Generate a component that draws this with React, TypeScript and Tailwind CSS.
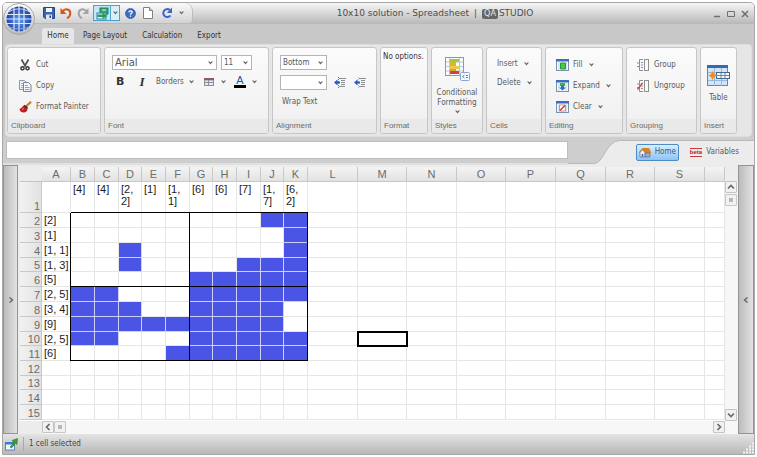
import type { ReactNode } from "react";

const COLUMNS = [
  { name: "A", width: 29 },
  { name: "B", width: 24 },
  { name: "C", width: 24 },
  { name: "D", width: 23 },
  { name: "E", width: 24 },
  { name: "F", width: 24 },
  { name: "G", width: 23 },
  { name: "H", width: 24 },
  { name: "I", width: 24 },
  { name: "J", width: 23 },
  { name: "K", width: 24 },
  { name: "L", width: 50 },
  { name: "M", width: 49 },
  { name: "N", width: 50 },
  { name: "O", width: 49 },
  { name: "P", width: 50 },
  { name: "Q", width: 50 },
  { name: "R", width: 49 },
  { name: "S", width: 50 },
  { name: "", width: 0 },
];

const TOP_CLUES: Record<string, string> = {
  B: "[4]", C: "[4]", D: "[2, 2]", E: "[1]", F: "[1, 1]",
  G: "[6]", H: "[6]", I: "[7]", J: "[1, 7]", K: "[6, 2]",
};

type Row = { n: number; height: number; clue?: string; filled?: string };

const ROWS: Row[] = [
  { n: 1, height: 31 },
  { n: 2, height: 15, clue: "[2]", filled: "JK" },
  { n: 3, height: 15, clue: "[1]", filled: "K" },
  { n: 4, height: 15, clue: "[1, 1]", filled: "DK" },
  { n: 5, height: 14, clue: "[1, 3]", filled: "DIJK" },
  { n: 6, height: 15, clue: "[5]", filled: "GHIJK" },
  { n: 7, height: 15, clue: "[2, 5]", filled: "BCGHIJK" },
  { n: 8, height: 15, clue: "[3, 4]", filled: "BCDGHIJ" },
  { n: 9, height: 15, clue: "[9]", filled: "BCDEFGHIJ" },
  { n: 10, height: 14, clue: "[2, 5]", filled: "BCGHIJK" },
  { n: 11, height: 15, clue: "[6]", filled: "FGHIJK" },
  { n: 12, height: 15 },
  { n: 13, height: 14 },
  { n: 14, height: 15 },
  { n: 15, height: 15 },
];

const BLACK_RIGHT = "relative border-r-0 after:absolute after:top-0 after:right-0 after:w-px after:bg-black";
const BLACK_BOTTOM = "relative border-b-0 before:absolute before:bottom-0 before:left-0 before:h-px before:bg-black";

function cellClass(col: string, row: Row) {
  const inBoard = row.n >= 2 && row.n <= 11;
  const boardCol = col >= "B" && col <= "K";
  const filled = col !== "" && !!row.filled?.includes(col);
  const blackRight = inBoard && (col === "A" || col === "F" || col === "K");
  const blackBottom = boardCol && (row.n === 1 || row.n === 6 || row.n === 11);
  return [
    "p-0 pl-[2px] text-left",
    row.n === 1 ? "pt-px align-top" : "whitespace-nowrap align-middle",
    filled ? "border-[#cdd0fa] bg-[#4a55e6]" : "border-[#e6e6e6] bg-white",
    blackRight ? BLACK_RIGHT : "border-r",
    blackRight && (blackBottom ? "after:bottom-0" : "after:-bottom-px"),
    blackBottom ? BLACK_BOTTOM : "border-b",
    blackBottom && (blackRight ? "before:right-0" : "before:-right-px"),
    col === "M" && row.n === 10 && "outline-2 -outline-offset-1 outline-black",
  ]
    .filter(Boolean)
    .join(" ");
}

function Chevron({ className = "" }: { className?: string }) {
  return (
    <svg viewBox="0 0 5 4" className={"h-[4px] w-[5px] shrink-0 " + className} aria-hidden="true">
      <path d="M0 .5h1.5l1 1 1-1H5L2.5 3.5z" fill="#666" />
    </svg>
  );
}

function SaveIcon() {
  return (
    <svg viewBox="0 0 12 12" className="size-[12px]">
      <path d="M.5.5h11v11H2l-1.500-1.500z" fill="#3c64b4" stroke="#24448c" />
      <path d="M3 1h6v4H3z" fill="#f2f6fc" />
      <path d="M3 7.500h6V12H3z" fill="#dfe4ee" />
      <path d="M6.500 8.500h1.500V11H6.500z" fill="#24448c" />
    </svg>
  );
}

function UndoIcon({ redo = false }: { redo?: boolean }) {
  const color = redo ? "#a4a4a4" : "#d8551c";
  return (
    <svg viewBox="0 0 12 12" className={redo ? "size-[12px] -scale-x-100" : "size-[12px]"}>
      <path d="M2.500 4.500C5 1 10.500 2 10.300 6.500 10.200 9 8.500 10.500 7 11.200" fill="none" stroke={color} strokeWidth="2" />
      <path d="M.5 1v6h6z" fill={color} />
    </svg>
  );
}

function SwitchIcon() {
  return (
    <svg viewBox="0 0 13 13" className="size-[13px]">
      <rect x="4" y="1" width="8" height="6" fill="#2faa6a" stroke="#1c7c58" />
      <rect x="1" y="6" width="9" height="6" fill="#e8f6ff" stroke="#3577b8" />
      <path d="M1.500 7.500l5 0V5.500l5 3.500-5 3V10h-5z" fill="#22a052" />
      <path d="M6 3h4" stroke="#d8f4e2" />
    </svg>
  );
}

function HelpIcon() {
  return (
    <svg viewBox="0 0 12 12" className="size-[11px]">
      <circle cx="6" cy="6" r="5.300" fill="#3a6fc4" stroke="#24509c" />
      <path d="M4.200 4.600C4.300 2.500 8 2.600 7.800 4.700 7.700 5.800 6 5.900 6 7.300" fill="none" stroke="#fff" strokeWidth="1.400" />
      <rect x="5.300" y="8.200" width="1.400" height="1.400" fill="#fff" />
    </svg>
  );
}

function PageIcon() {
  return (
    <svg viewBox="0 0 10 12" className="h-[12px] w-[10px]">
      <path d="M.5.5h6l3 3v8h-9z" fill="#fff" stroke="#808080" />
      <path d="M6.500.5v3h3" fill="#ddd" stroke="#808080" />
    </svg>
  );
}

function RefreshIcon() {
  return (
    <svg viewBox="0 0 12 12" className="size-[12px]">
      <path d="M9.500 8.500A4 4 0 1 1 8.800 3" fill="none" stroke="#3c64c8" strokeWidth="2" />
      <path d="M11 .5V6H5.800z" fill="#3c64c8" />
    </svg>
  );
}

function Orb() {
  return (
    <svg viewBox="0 0 32 32" className="size-[32px]">
      <defs>
        <radialGradient id="orb" cx="50%" cy="55%" r="55%">
          <stop offset="0" stopColor="#5ea0f4" />
          <stop offset="1" stopColor="#1c3c9c" />
        </radialGradient>
        <linearGradient id="ring" x1="0" y1="0" x2="0" y2="1">
          <stop offset="0" stopColor="#fdfdfd" />
          <stop offset="1" stopColor="#b8b8b8" />
        </linearGradient>
      </defs>
      <circle cx="16" cy="16" r="15.500" fill="url(#ring)" stroke="#a8a8a8" />
      <circle cx="16" cy="16" r="12.500" fill="url(#orb)" />
      <path d="M11 4v24M16 3v26M21 4v24M4 11.500h24M3 16h26M4 20.500h24" stroke="#dce8fb" strokeWidth="1.200" fill="none" />
      <path d="M6 8.500Q16 3 26 8.500" stroke="#c8d8f8" fill="none" />
      <path d="M6 24Q16 28 26 24" stroke="#8cacec" fill="none" />
    </svg>
  );
}

function CutIcon() {
  return (
    <svg viewBox="0 0 10 12" className="h-[12px] w-[10px]">
      <path d="M1.500.5l4 7M8.500.5l-4 7" stroke="#505050" strokeWidth="1.700" />
      <circle cx="2.500" cy="9.300" r="1.600" fill="none" stroke="#303030" strokeWidth="1.400" />
      <circle cx="7.500" cy="9.300" r="1.600" fill="none" stroke="#303030" strokeWidth="1.400" />
    </svg>
  );
}

function CopyIcon() {
  return (
    <svg viewBox="0 0 14 12" className="h-[12px] w-[14px]">
      <path d="M1.500.5h5l2 2v7h-7z" fill="#eef1f5" stroke="#8c96a4" />
      <path d="M3 3.500h3M3 5.500h3M3 7.500h3" stroke="#a4aebc" />
      <path d="M5.500 2.500h5l2.500 2.500v6.500h-7.500z" fill="#f3f5f8" stroke="#7a8494" />
      <path d="M7 5.500h3M7 7.500h4.500M7 9.500h4.500" stroke="#96a0b0" />
    </svg>
  );
}

function BrushIcon() {
  return (
    <svg viewBox="0 0 13 12" className="h-[12px] w-[13px]">
      <path d="M12 .8L7 5.500" stroke="#c08018" strokeWidth="2.200" />
      <path d="M5 4.500l3.500 3" stroke="#3c2c14" strokeWidth="2" />
      <path d="M4.500 4.500L8.500 8.500Q7.500 12 4 11.500 1 11 .5 8 2.500 7.500 4.500 4.500z" fill="#c41c20" />
      <path d="M3 8.500l2-1" stroke="#f48c84" />
    </svg>
  );
}

function GridIcon() {
  return (
    <svg viewBox="0 0 10 8" className="h-[8px] w-[10px]">
      <rect width="10" height="8" fill="#8c9098" />
      <path d="M0 0h10v2H0z" fill="#8a5c60" />
      <path d="M1 2.500h3v1.500H1zM5 2.500h4v1.500H5zM1 5h3v2H1zM5 5h4v2H5z" fill="#e4e8f0" />
    </svg>
  );
}

function IndentIcon({ light = false }: { light?: boolean }) {
  return (
    <svg viewBox="0 0 12 11" className="h-[11px] w-[12px]">
      <path d="M5 1.500h7M7 3.500h4M7 5.500h4M7 7.500h4M5 9.500h6" stroke="#888d98" />
      <path d="M4.500 0v11" stroke={light ? "#b0bccc" : "#6c7890"} strokeDasharray="1 1" />
      <path d="M0 5.500L3.500 2.500v2H6v2H3.500v2z" fill="#2c58c0" />
    </svg>
  );
}

function ConditionalIcon() {
  return (
    <svg viewBox="0 0 25 24" className="h-[24px] w-[25px]">
      <rect x=".5" y=".5" width="18" height="18" fill="#fafcff" stroke="#7c9cc4" />
      <path d="M4.500 1v17M14.500 1v17M1 5h17M1 9.500h17M1 14h17" stroke="#b4c8e0" />
      <rect x="5" y="2" width="9" height="3" fill="#a4c83c" />
      <rect x="5" y="5" width="6" height="4" fill="#e0b430" />
      <rect x="5" y="9" width="9" height="3" fill="#e8cc48" />
      <rect x="5" y="12" width="6" height="2" fill="#e89c34" />
      <rect x="5" y="14" width="9" height="3" fill="#d04434" />
      <rect x="15.500" y="15.500" width="9" height="8" rx="1" fill="#f4f8ff" stroke="#8ca4d0" />
      <path d="M19.500 18l-2 1.500 2 1.500M21 18.500h2M21 20.500h2" fill="none" stroke="#5c7cc0" />
    </svg>
  );
}

function EditIcon({ kind }: { kind: "fill" | "expand" | "clear" }) {
  return (
    <svg viewBox="0 0 13 12" className="h-[12px] w-[13px]">
      <rect x=".5" y=".5" width="12" height="11" fill="#f4f7fb" stroke="#7c90b0" />
      <path d="M0 0h13v2.500H0z" fill="#3c6cc0" />
      <path d="M3 3v8M10 3v8" stroke="#c8d4e4" />
      {kind === "fill" && <path d="M4.500 4h5v6h-5z" fill="#48c848" stroke="#249c34" />}
      {kind === "expand" && (
        <>
          <path d="M4 3h5v3H4z" fill="#38b448" />
          <path d="M5 5.500h3v2h2l-3.500 3-3.500-3h2z" fill="#2c6cc8" />
        </>
      )}
      {kind === "clear" && (
        <>
          <path d="M3.500 4h6v6h-6z" fill="#fff" stroke="#c89494" />
          <path d="M4 9.500l5-5" stroke="#c83830" strokeWidth="1.400" />
        </>
      )}
    </svg>
  );
}

function GroupIcon({ off = false }: { off?: boolean }) {
  return (
    <svg viewBox="0 0 12 12" className="size-[12px]">
      <path d="M6 .5H2.500v11H6" fill="none" stroke="#909090" />
      <path d="M0 4h2.500M4 3.500h2M4 6h2M4 8.500h2M0 7.500h2.500" stroke={off ? "#b88484" : "#909090"} />
      <rect x="7.500" y=".5" width="4" height="11" fill="#fafafa" stroke="#909090" />
      {off && <path d="M.5 9.500L5.500 3" stroke="#c44848" strokeWidth="1.300" />}
    </svg>
  );
}

function TableIcon() {
  return (
    <svg viewBox="0 0 23 22" className="h-[22px] w-[23px]">
      <rect x=".5" y=".5" width="20" height="20" fill="#d4e4f6" stroke="#5c88c0" />
      <path d="M0 0h21v3H0z" fill="#2c6cb8" />
      <path d="M7.500 3v18M14.500 3v18M1 7.500h19M1 15.500h19" stroke="#94b8e0" />
      <rect x="9.500" y="7.500" width="13" height="6" fill="#f4f8fc" stroke="#48688c" />
      <path d="M10 10.500h12M14 8v5M18 8v5" stroke="#6c88a8" />
      <path d="M5.500 6l1.500 3L10.500 10.500 7 12 5.500 15 4 12 1.500 10.500 4 9z" fill="#f08c1c" />
    </svg>
  );
}

function HomeIcon() {
  return (
    <svg viewBox="0 0 12 11" className="h-[11px] w-[12px]">
      <path d="M0 5l3.500-4H10l2 4v1H0z" fill="#d88424" />
      <path d="M1 5.500l2.500-3 2.500 3V10H1z" fill="#f0f0f4" stroke="#5c6c94" strokeWidth=".7" />
      <path d="M6 6h5v4H6z" fill="#9cacc8" stroke="#5c6c94" strokeWidth=".7" />
      <path d="M2.700 7h1.600v3H2.700z" fill="#4c6cb0" />
    </svg>
  );
}

function ExportIcon() {
  return (
    <svg viewBox="0 0 13 13" className="size-[13px]">
      <rect x=".5" y="4.500" width="9" height="7.500" fill="#f0f6ff" stroke="#5484bc" />
      <path d="M0 4h10v2.500H0z" fill="#3c7cc8" />
      <path d="M5 9l4-4.500-2-2L12.500.5 12 6.500l-1.500-1.200-4 4.700z" fill="#3c9c3c" stroke="#206c24" strokeWidth=".5" />
    </svg>
  );
}

function Group({ label, width, children }: { label: string; width: string; children: ReactNode }) {
  return (
    <section
      aria-label={label}
      className={"flex shrink-0 flex-col overflow-hidden rounded-[3px] border border-[#c6c6c6] bg-linear-to-b from-[#fbfbfb] to-[#efefef] " + width}
    >
      <div className="flex-1">{children}</div>
      <h2 className="h-[14px] bg-[#e9e9e9] pl-[3px] font-['Liberation_Sans',sans-serif] text-[8px] leading-[14px] text-[#6c6c6c]">
        {label}
      </h2>
    </section>
  );
}

function Command({ icon, text, menu = false }: { icon: ReactNode; text: string; menu?: boolean }) {
  return (
    <button type="button" className="flex h-[21px] items-center gap-[4px] whitespace-nowrap">
      <span className="flex w-[14px] justify-center">{icon}</span>
      {text}
      {menu && <Chevron className="ml-[2px]" />}
    </button>
  );
}

function Dropdown({ label, options, className }: { label: string; options: string[]; className: string }) {
  return (
    <span className="relative flex self-start">
      <select
        aria-label={label}
        className={"h-[15px] appearance-none border border-[#b4b4b4] bg-white pl-[2px] leading-[13px] text-[#555] " + className}
      >
        {options.map((o) => (
          <option key={o}>{o}</option>
        ))}
      </select>
      <Chevron className="pointer-events-none absolute top-[6px] right-[4px]" />
    </span>
  );
}

function ScrollButton({ d, label }: { d: string; label: string }) {
  return (
    <button
      type="button"
      aria-label={label}
      className="flex size-[12px] shrink-0 items-center justify-center rounded-[1px] border border-[#c4c4c4] bg-[#f1f1f1]"
    >
      <svg viewBox="0 0 8 8" className="size-[8px]">
        <path d={d} fill="none" stroke="#666" strokeWidth="1.600" />
      </svg>
    </button>
  );
}

function Thumb() {
  return (
    <span className="flex size-[12px] shrink-0 items-center justify-center rounded-[1px] border border-[#c8c8c8] bg-[#f1f1f1]">
      <span className="size-[4px] bg-[#b8b8b8]" />
    </span>
  );
}

function TitleBar() {
  return (
    <header className="flex h-[21px] shrink-0 items-start bg-linear-to-b from-[#f6f6f6] to-[#b8b8b8]">
      <div className="flex h-[20px] w-[190px] shrink-0 items-center rounded-tr-[8px] rounded-br-[4px] border-r border-[#bdbdbd] bg-linear-to-b from-[#fafafa] to-[#d2d2d2] pl-[40px]">
        <button type="button" aria-label="Save"><SaveIcon /></button>
        <button type="button" aria-label="Undo" className="ml-[5px]"><UndoIcon /></button>
        <button type="button" aria-label="Redo" className="ml-[5px]"><UndoIcon redo /></button>
        <button type="button" aria-label="Switch view" className="ml-[4px] flex h-[16px] w-[18px] items-center justify-center border border-[#48a4c8] bg-[#c4e8f6]"><SwitchIcon /></button>
        <button type="button" aria-label="View options" className="flex h-[16px] w-[9px] items-center justify-center border border-l-0 border-[#48a4c8] bg-[#d8f0fa]"><Chevron /></button>
        <button type="button" aria-label="Help" className="ml-[5px]"><HelpIcon /></button>
        <button type="button" aria-label="New" className="ml-[7px]"><PageIcon /></button>
        <button type="button" aria-label="Refresh" className="ml-[8px]"><RefreshIcon /></button>
        <button type="button" aria-label="More" className="ml-[6px]"><Chevron /></button>
      </div>
      <h1 className="flex h-[22px] flex-1 items-center justify-center pl-[43px] font-['DejaVu_Sans',sans-serif] text-[9px] whitespace-nowrap text-[#4c4c4c]">
        10x10 solution - Spreadsheet
        <span className="px-[5px]">|</span>
        <span className="mr-px rounded-[2px] bg-[#666] px-[2px] text-[8px] leading-[10px] text-[#eee]">QA</span>
        <span>STUDIO</span>
      </h1>
      <div className="flex h-[22px] w-[120px] shrink-0 items-center justify-end gap-[6px] pr-[5px] text-[#707070]">
        <button type="button" aria-label="Minimize"><svg viewBox="0 0 8 8" className="size-[8px]"><path d="M1 6.500h6" stroke="currentColor" strokeWidth="1.300" /></svg></button>
        <button type="button" aria-label="Maximize"><svg viewBox="0 0 8 8" className="size-[8px]"><path d="M.5 1.500h7v5h-7z" fill="none" stroke="currentColor" /></svg></button>
        <button type="button" aria-label="Close"><svg viewBox="0 0 8 8" className="size-[8px]"><path d="M1 1l6 6M7 1L1 7" stroke="currentColor" strokeWidth="1.500" /></svg></button>
      </div>
    </header>
  );
}

function Ribbon() {
  return (
    <div className="mx-[2px] flex h-[93px] shrink-0 gap-[3px] overflow-hidden rounded-[4px] border border-[#dedede] bg-[#e6e6e6] p-[2px] pl-px">
      <Group label="Clipboard" width="w-[94px]">
        <div className="pt-[6px] pl-[10px]">
          <Command icon={<CutIcon />} text="Cut" />
          <Command icon={<CopyIcon />} text="Copy" />
          <Command icon={<BrushIcon />} text="Format Painter" />
        </div>
      </Group>
      <Group label="Font" width="w-[165px]">
        <div className="pt-[7px] pl-[7px]">
          <div className="flex gap-[4px]">
            <Dropdown label="Font" options={["Arial"]} className="w-[105px] font-['DejaVu_Sans',sans-serif] text-[10px]" />
            <Dropdown label="Font size" options={["11"]} className="w-[31px]" />
          </div>
          <div className="flex h-[24px] items-center pl-[4px]">
            <button type="button" className="w-[12px] text-left font-['DejaVu_Sans',sans-serif] text-[11px] font-bold text-[#333]" aria-label="Bold">B</button>
            <button type="button" className="ml-[9px] w-[10px] font-['Liberation_Serif',serif] text-[13px] font-bold text-[#333] italic" aria-label="Italic">I</button>
            <button type="button" className="ml-[9px] flex items-center gap-[5px]">Borders<Chevron /></button>
            <button type="button" aria-label="Cell style" className="ml-[10px] flex items-center gap-[7px]"><GridIcon /><Chevron /></button>
            <button type="button" aria-label="Font color" className="ml-[8px] flex items-center gap-[6px]">
              <span className="w-[12px] border-b-[3px] border-black text-center font-['Liberation_Sans',sans-serif] text-[11px] leading-[9px] text-[#2c50a8]">A</span>
              <Chevron />
            </button>
          </div>
        </div>
      </Group>
      <Group label="Alignment" width="w-[105px]">
        <div className="flex flex-col gap-[5px] pt-[7px] pl-[7px]">
          <Dropdown label="Vertical alignment" options={["Bottom"]} className="w-[47px]" />
          <div className="flex items-center gap-[7px]">
            <Dropdown label="Horizontal alignment" options={[""]} className="w-[47px]" />
            <button type="button" aria-label="Decrease indent"><IndentIcon /></button>
            <button type="button" aria-label="Increase indent" className="ml-px"><IndentIcon light /></button>
          </div>
          <button type="button" className="self-start pl-[2px] leading-[14px]">Wrap Text</button>
        </div>
      </Group>
      <Group label="Format" width="w-[48px]">
        <p className="pt-[3px] pl-[2px] leading-[12px] whitespace-nowrap text-[#333]">No options.</p>
      </Group>
      <Group label="Styles" width="w-[52px]">
        <button type="button" className="flex w-full flex-col items-center pt-[9px] leading-[10px]">
          <ConditionalIcon />
          <span className="pt-[7px]">Conditional</span>
          <span>Formatting</span>
          <Chevron className="mt-[2px]" />
        </button>
      </Group>
      <Group label="Cells" width="w-[56px]">
        <div className="flex flex-col items-start pt-[6px] pl-[10px]">
          <button type="button" className="flex h-[19px] items-center gap-[6px]">Insert<Chevron /></button>
          <button type="button" className="flex h-[19px] items-center gap-[6px]">Delete<Chevron /></button>
        </div>
      </Group>
      <Group label="Editing" width="w-[78px]">
        <div className="pt-[6px] pl-[9px]">
          <Command icon={<EditIcon kind="fill" />} text="Fill" menu />
          <Command icon={<EditIcon kind="expand" />} text="Expand" menu />
          <Command icon={<EditIcon kind="clear" />} text="Clear" menu />
        </div>
      </Group>
      <Group label="Grouping" width="w-[71px]">
        <div className="pt-[6px] pl-[9px]">
          <Command icon={<GroupIcon />} text="Group" />
          <Command icon={<GroupIcon off />} text="Ungroup" />
        </div>
      </Group>
      <Group label="Insert" width="w-[37px]">
        <button type="button" className="flex w-full flex-col items-center gap-[5px] pt-[17px] leading-[12px]">
          <TableIcon />
          Table
        </button>
      </Group>
    </div>
  );
}

function FormulaBar() {
  return (
    <div className="flex h-[28px] shrink-0 bg-[#cecece]">
      <div className="flex min-w-0 flex-1 items-center border-b-2 border-[#e0e0e0] pl-[3px]">
        <input aria-label="Formula" className="h-[18px] w-full border border-[#bdbdbd] bg-white px-[3px] outline-none" />
      </div>
      <svg viewBox="0 0 56 28" className="h-[28px] w-[56px] shrink-0" aria-hidden="true">
        <path d="M0 26.500H26C36 26.500 38 3.500 52 3.500H56V28H0z" fill="#ececec" />
        <path d="M0 26.500H26C36 26.500 38 3.500 52 3.500H56" fill="none" stroke="#b8b8b8" />
      </svg>
      <nav className="mt-[3px] flex items-center gap-[11px] border-t border-[#b8b8b8] bg-[#ececec] pr-[15px] pb-[2px] pl-[12px]">
        <button type="button" className="flex h-[17px] w-[43px] items-center justify-center gap-[4px] rounded-[2px] border border-[#4c8cc4] bg-linear-to-b from-[#d8eeff] to-[#8cc4f4] text-[#355c80]">
          <HomeIcon />Home
        </button>
        <button type="button" className="flex items-center gap-[4px]">
          <span className="border-y border-[#c83838] font-['Liberation_Sans',sans-serif] text-[6px] leading-[7px] font-bold text-[#b82020]">beta</span>
          Variables
        </button>
      </nav>
    </div>
  );
}

function Sheet() {
  return (
    <div className="flex min-w-0 flex-1 flex-col bg-[#ececec] pt-[2px] pl-[2px]">
      <div className="flex min-h-0 flex-1">
        <div className="min-w-0 flex-1 overflow-hidden bg-white font-['Liberation_Sans',sans-serif] text-[11px] leading-[12px]">
          <table className="w-full table-fixed border-separate border-spacing-0">
            <colgroup>
              <col className="w-[22px]" />
              {COLUMNS.map((c, i) => (
                <col key={i} style={c.width ? { width: c.width } : undefined} />
              ))}
            </colgroup>
            <thead>
              <tr className="h-[15px]">
                <td className="border-b border-[#c4c4c4] bg-[#ececec] p-0" />
                {COLUMNS.map((c, i) => (
                  <th
                    key={i}
                    scope="col"
                    className="border-r border-b border-[#c8c8c8] bg-linear-to-b from-[#f4f4f4] to-[#e2e2e2] p-0 font-normal text-[#6c6c6c]"
                  >
                    {c.name}
                  </th>
                ))}
              </tr>
            </thead>
            <tbody className="text-[#1c1c1c]">
              {ROWS.map((row) => (
                <tr key={row.n} style={{ height: row.height }}>
                  <th
                    scope="row"
                    className="border-r border-b border-[#c8c8c8] bg-linear-to-r from-[#f2f2f2] to-[#e2e2e2] p-0 pr-[1px] text-right align-bottom font-normal text-[#6c6c6c]"
                  >
                    {row.n}
                  </th>
                  {COLUMNS.map((c, i) => (
                    <td key={i} className={cellClass(c.name, row)}>
                      {row.n === 1 ? TOP_CLUES[c.name] : c.name === "A" ? row.clue : null}
                    </td>
                  ))}
                </tr>
              ))}
            </tbody>
          </table>
        </div>
        <div className="flex w-[13px] shrink-0 flex-col justify-between bg-[#f7f7f7]">
          <div className="flex flex-col gap-px border-t-[14px] border-[#ececec]">
            <ScrollButton label="Scroll up" d="M1 5.500l3-3 3 3" />
            <Thumb />
          </div>
          <ScrollButton label="Scroll down" d="M1 2.500l3 3 3-3" />
        </div>
      </div>
      <div className="flex h-[13px] shrink-0 justify-between bg-[#f7f7f7] pr-[13px]">
        <div className="flex border-l-[22px] border-[#ececec]">
          <ScrollButton label="Scroll left" d="M5.500 1l-3 3 3 3" />
          <Thumb />
        </div>
        <ScrollButton label="Scroll right" d="M2.500 1l3 3-3 3" />
      </div>
    </div>
  );
}

export default function App() {
  return (
    <div className="h-screen bg-white p-[2px] font-['DejaVu_Sans_Condensed','DejaVu_Sans',sans-serif] text-[8px] text-[#5a5a5a]">
      <div className="relative flex h-full flex-col overflow-hidden rounded-t-[5px] border border-[#a8a8a8] bg-[#c8c8c8]">
        <TitleBar />
        <button type="button" aria-label="Application menu" className="absolute top-0 left-0">
          <Orb />
        </button>
        <nav className="flex h-[20px] shrink-0 items-end gap-[9px] pl-[39px] text-[#333]">
          <button type="button" className="h-[16px] w-[32px] rounded-t-[3px] bg-[#e6e6e6]">Home</button>
          <button type="button" className="h-[16px]">Page Layout</button>
          <button type="button" className="ml-[6px] h-[16px]">Calculation</button>
          <button type="button" className="ml-[6px] h-[16px]">Export</button>
        </nav>
        <Ribbon />
        <FormulaBar />
        <main className="flex min-h-0 flex-1">
          <button type="button" aria-label="Open left panel" className="flex w-[15px] shrink-0 items-center justify-center border border-[#949494] bg-linear-to-r from-[#bcbcbc] to-[#e2e2e2]">
            <svg viewBox="0 0 6 6" className="size-[6px]"><path d="M1.500.5l3 2.500-3 2.500" fill="none" stroke="#666" strokeWidth="1.400" /></svg>
          </button>
          <Sheet />
          <button type="button" aria-label="Open right panel" className="flex w-[16px] shrink-0 items-center justify-center border border-[#949494] bg-linear-to-r from-[#bcbcbc] to-[#e2e2e2]">
            <svg viewBox="0 0 6 6" className="size-[6px]"><path d="M4.500.5l-3 2.500 3 2.500" fill="none" stroke="#666" strokeWidth="1.400" /></svg>
          </button>
        </main>
        <footer className="flex h-[20px] shrink-0 items-center bg-linear-to-b from-[#e4e4e4] to-[#b8b8b8] pl-[2px] text-[#444]">
          <ExportIcon />
          <span className="ml-[5px] h-[14px] border-l border-[#a8a8a8]" />
          <span className="ml-[5px] flex-1">1 cell selected</span>
          <svg viewBox="0 0 12 12" className="size-[12px] self-end">
            <path d="M1 10.500h11M4 7.500h8M7 4.500h5M10 1.500h2" stroke="#f4f4f4" strokeWidth="2" strokeDasharray="2 1" />
          </svg>
        </footer>
      </div>
    </div>
  );
}
